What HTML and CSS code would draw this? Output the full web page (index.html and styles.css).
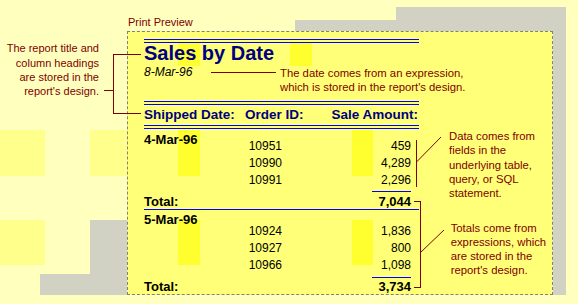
FILE: index.html
```html
<!DOCTYPE html>
<html lang="en">
<head>
<meta charset="utf-8">
<title>Print Preview</title>
<link rel="stylesheet" href="styles.css">
</head>
<body>
<div class="screen">
  <div class="label-row"><span class="label">Print Preview</span></div>
  <div class="main">
    <div class="side-note">The report title and<br>column headings<br>are stored in the<br>report's design.</div>
    <div class="page">
      <div class="report">
        <div class="rule-double rule-top"></div>
        <div class="title">Sales by Date</div>
        <div class="run-date">8-Mar-96</div>
        <div class="rule-double rule-mid"></div>
        <div class="headings">
          <span class="h-date">Shipped Date:</span>
          <span class="h-order">Order ID:</span>
          <span class="h-amount">Sale Amount:</span>
        </div>
        <div class="rule-double rule-head"></div>

        <div class="group group-first">
          <div class="g-date">4-Mar-96</div>
          <div class="rows">
            <span class="oid">10951</span><span class="amt">459</span>
            <span class="oid">10990</span><span class="amt">4,289</span>
            <span class="oid">10991</span><span class="amt">2,296</span>
          </div>
          <div class="subrule"></div>
          <div class="total"><span>Total:</span><span>7,044</span></div>
        </div>
        <div class="fullrule"></div>
        <div class="group group-second">
          <div class="g-date">5-Mar-96</div>
          <div class="rows">
            <span class="oid">10924</span><span class="amt">1,836</span>
            <span class="oid">10927</span><span class="amt">800</span>
            <span class="oid">10966</span><span class="amt">1,098</span>
          </div>
          <div class="subrule"></div>
          <div class="total"><span>Total:</span><span>3,734</span></div>
        </div>
      </div>
    </div>
  </div>

  <div class="note note-date">The date comes from an expression,<br>which is stored in the report's design.</div>
  <div class="note note-data">Data comes from<br>fields in the<br>underlying table,<br>query, or SQL<br>statement.</div>
  <div class="note note-totals">Totals come from<br>expressions, which<br>are stored in the<br>report's design.</div>

  <svg class="leaders" width="578" height="304" viewBox="0 0 578 304" aria-hidden="true">
    <g fill="none" stroke="#800000" stroke-width="1" shape-rendering="crispEdges">
      <path d="M113.5 54 V114"/>
      <path d="M113 54.5 H141"/>
      <path d="M113 113.5 H141"/>
      <path d="M104 90.5 H113"/>
      <path d="M211 72.5 H276"/>
      <path d="M416.5 140 V187"/>
      <path d="M414 201.5 H421"/>
      <path d="M420.5 201.5 V288"/>
      <path d="M414 287.5 H421"/>
    </g>
    <g fill="none" stroke="#800000" stroke-width="1">
      <path d="M416.5 162 L441 137"/>
      <path d="M421 252 L444 230"/>
    </g>
  </svg>
</div>
</body>
</html>
```

FILE: styles.css
```css
* { box-sizing: border-box; }

html, body {
  margin: 0;
  padding: 0;
}

body {
  width: 578px;
  height: 304px;
  overflow: hidden;
  font-family: "Liberation Sans", Arial, sans-serif;
  background:
    linear-gradient(#d2d2c4, #d2d2c4) 396px 7px / 170px 24px no-repeat,
    linear-gradient(#d2d2c4, #d2d2c4) 295px 20px / 101px 11px no-repeat,
    linear-gradient(#d2d2c4, #d2d2c4) 553px 31px / 13px 264px no-repeat,
    linear-gradient(#d2d2c4, #d2d2c4) 90px 220px / 37px 75px no-repeat,
    linear-gradient(#d2d2c4, #d2d2c4) 40px 274px / 50px 21px no-repeat,
    linear-gradient(#ffff8c, #ffff8c) 0 130px / 45px 46px no-repeat,
    linear-gradient(#ffff8c, #ffff8c) 0 220px / 45px 45px no-repeat,
    linear-gradient(#ffff8c, #ffff8c) 90px 130px / 37px 46px no-repeat,
    #ffffbe;
}

.screen {
  position: relative;
  width: 578px;
  height: 304px;
}

/* caption above the page */
.label-row {
  padding: 15px 0 0 128px;
  height: 31px;
}
.label {
  display: block;
  font-size: 11px;
  line-height: 14px;
  color: #800000;
}

.main {
  display: flex;
  align-items: flex-start;
}

.side-note {
  width: 127px;
  flex: none;
  padding: 10.4px 28px 0 0;
  text-align: right;
  font-size: 11px;
  line-height: 14.2px;
  color: #800000;
  white-space: nowrap;
}

/* the preview page */
.page {
  width: 426px;
  height: 264px;
  flex: none;
  border: 1px dashed #808080;
  padding: 0 0 0 16px;
  background:
    linear-gradient(#ffff30, #ffff30) 50px 10px / 22px 24px no-repeat,
    linear-gradient(#ffff30, #ffff30) 162px 10px / 22px 24px no-repeat,
    linear-gradient(#ffff30, #ffff30) 50px 98px / 22px 46px no-repeat,
    linear-gradient(#ffff30, #ffff30) 50px 188px / 22px 45px no-repeat,
    linear-gradient(#ffff30, #ffff30) 224px 98px / 21px 46px no-repeat,
    linear-gradient(#ffff30, #ffff30) 224px 188px / 21px 45px no-repeat,
    #ffff78;
}

.report {
  width: 275px;
  color: #000;
}

.rule-double {
  height: 4px;
  border-top: 1px solid #0000ff;
  border-bottom: 1px solid #0000ff;
}
.rule-top { margin-top: 7px; }
.rule-mid { margin-top: 22px; }
.rule-head { margin-top: 2px; }

.title {
  font-size: 20px;
  line-height: 20px;
  font-weight: bold;
  color: #000080;
}

.run-date {
  margin-top: 2px;
  font-size: 12px;
  line-height: 14px;
  font-style: italic;
}

.headings {
  margin-top: 2px;
  display: flex;
  font-size: 13.5px;
  line-height: 16px;
  font-weight: bold;
  color: #000080;
  white-space: nowrap;
}
.h-date { width: 101px; flex: none; }
.h-order { flex: 1; }
.h-amount { text-align: right; padding-right: 1px; }

.g-date {
  font-size: 13px;
  line-height: 15px;
  font-weight: bold;
}
.group-first .g-date { margin-top: 3.2px; }
.group-second .g-date { margin-top: 2px; }

.rows {
  display: grid;
  grid-template-columns: 138px 129px;
  grid-auto-rows: 16.8px;
  font-size: 12px;
  line-height: 16.8px;
  text-align: right;
}
.group-first .rows { margin-top: -9px; }
.group-second .rows { margin-top: -3.7px; }

.subrule {
  width: 39px;
  margin-left: 228px;
  border-top: 1px solid #0000ff;
}
.group-first .subrule { margin-top: 2.4px; }
.group-second .subrule { margin-top: 3.4px; }

.total {
  display: flex;
  justify-content: space-between;
  padding-right: 8px;
  font-size: 13px;
  line-height: 15px;
  font-weight: bold;
}
.group-first .total { margin-top: 2.2px; }
.group-second .total { margin-top: 0.6px; }

.fullrule {
  border-top: 1px solid #0000ff;
}

/* callouts lying over the page */
.note {
  position: absolute;
  font-size: 11.3px;
  line-height: 14.2px;
  color: #800000;
  white-space: nowrap;
}
.note-date { left: 280px; top: 65.8px; }
.note-data { left: 449px; top: 129.1px; }
.note-totals { left: 450.7px; top: 220.8px; }

.leaders {
  position: absolute;
  left: 0;
  top: 0;
  pointer-events: none;
}
```
